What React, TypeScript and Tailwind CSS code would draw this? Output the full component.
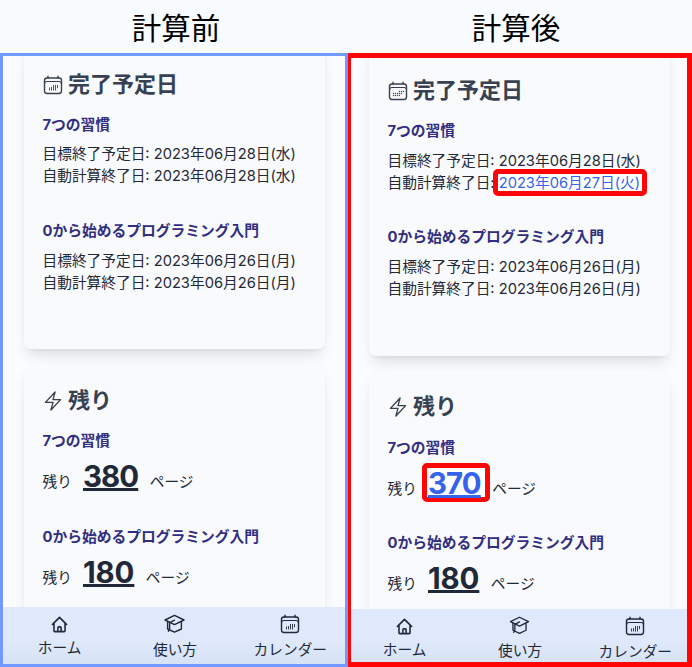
import type { ReactNode } from 'react';
import { HiOutlineBolt } from 'react-icons/hi2';
import { HiOutlineHome } from 'react-icons/hi';

const dots = [
  [12.5, 11.5], [14.5, 11.5], [16.5, 11.5],
  [6.5, 13.5], [8.5, 13.5], [10.5, 13.5], [12.5, 13.5], [14.5, 13.5],
  [6.5, 15.5], [8.5, 15.5], [10.5, 15.5], [12.5, 15.5],
];

function CalendarIcon({ bars, className = '' }: { bars?: boolean; className?: string }) {
  return (
    <svg
      viewBox="0 0 22 22"
      fill="none"
      stroke="currentColor"
      strokeWidth={1.4}
      strokeLinecap="round"
      strokeLinejoin="round"
      className={`size-[22px] shrink-0 ${className}`}
    >
      <rect x="2.5" y="4" width="17" height="15.5" rx="2.4" />
      <path d="M6 2.2v1.8M16 2.2v1.8" />
      <path strokeWidth={1.1} d="M2.8 9.2Q3.2 7.5 4.8 7.5h12.4Q18.8 7.5 19.2 9.2" />
      {bars ? (
        <path
          strokeWidth={0.9}
          strokeLinecap="butt"
          d="M7.5 13.5v3M9.5 13v3.5M11.5 11v5.5M13.5 11v5.5M15.5 11v3.2"
        />
      ) : (
        dots.map(([x, y]) => (
          <circle key={`${x}-${y}`} cx={x} cy={y} r={0.7} fill="currentColor" stroke="none" />
        ))
      )}
    </svg>
  );
}

function CapIcon() {
  return (
    <svg
      viewBox="0 0 21 20"
      fill="none"
      stroke="currentColor"
      strokeWidth={1.4}
      strokeLinecap="round"
      strokeLinejoin="round"
      className="mb-[1px] h-[20px] w-[21px]"
    >
      <path d="M1 6 10.5 1.3 20 6 10.5 10.6Z" />
      <path d="M3.6 7.4v7.6L10.5 18.2 17.4 15V7.4" />
      <path d="M10.5 6.2 5.6 8.8v5.8q0 1.6-1.2 2.6" />
    </svg>
  );
}

function Highlight({ children, box }: { children: ReactNode; box: string }) {
  return (
    <span className="relative inline-block text-[#3563e9]">
      <span className={`absolute rounded-[5px] border-[5px] border-[#ff0606] bg-white ${box}`} />
      <span className="relative">{children}</span>
    </span>
  );
}

function CardTitle({ icon, children }: { icon: ReactNode; children: ReactNode }) {
  return (
    <h2 className="-ml-[0.5px] flex h-[33px] items-center gap-[4px] text-[22px] leading-[33px] font-bold text-[#374151]">
      {icon}
      <span>{children}</span>
    </h2>
  );
}

function BookTitle({ children }: { children: ReactNode }) {
  return (
    <h3 className="h-[22px] text-[14.75px] leading-[22px] font-bold whitespace-nowrap text-[#312e81]">{children}</h3>
  );
}

function Dates({ target, auto, gap }: { target: string; auto: ReactNode; gap: string }) {
  return (
    <div className={`leading-[22px] whitespace-nowrap ${gap}`}>
      <p className="h-[22px]">目標終了予定日: {target}</p>
      <p className="h-[22px]">自動計算終了日: {auto}</p>
    </div>
  );
}

function Pages({ count, changed, tracking }: { count: string; changed?: boolean; tracking: string }) {
  const number = (
    <span
      className={`text-[29.4px] font-bold underline decoration-[3px] underline-offset-[1px] [text-decoration-skip-ink:none] ${tracking}`}
    >
      {count}
    </span>
  );
  return (
    <div className="flex h-[44px] items-baseline leading-[44px]">
      <span className="w-[40.5px]">残り</span>
      {changed ? <Highlight box="-left-[6.5px] top-[1px] h-[39px] w-[68px]">{number}</Highlight> : number}
      <span className="ml-[11.5px]">ページ</span>
    </div>
  );
}

function NavItem({ icon, label, gap }: { icon: ReactNode; label: string; gap: string }) {
  return (
    <div className={`flex flex-1 flex-col items-center pt-[7px] ${gap}`}>
      {icon}
      <span className="leading-[22px] whitespace-nowrap">{label}</span>
    </div>
  );
}

function Phone({ after }: { after?: boolean }) {
  return (
    <section
      className={`flex flex-col overflow-hidden bg-[#fbfcff] ${
        after ? 'w-[344px] border-y-[5px] border-r-[5px] border-l-[3px] border-[#ff0606]' : 'w-[348px] border-[3px] border-[#7199ff]'
      }`}
    >
      <div className={`flex min-h-0 flex-1 flex-col overflow-hidden ${after ? 'pl-[18px]' : 'pl-[21px]'}`}>
        <div
          className={`-mt-[20px] w-[301px] shrink-0 rounded-[7px] bg-[#f9fafc] pl-[18.5px] shadow-lg ${
            after ? 'h-[318px] pt-[36px]' : 'h-[313px] pt-[32px]'
          }`}
        >
          <CardTitle icon={<CalendarIcon bars={!after} />}>完了予定日</CardTitle>
          <div className="h-[13px]" />
          <BookTitle>7つの習慣</BookTitle>
          <Dates
            gap={after ? 'mt-[8px]' : 'mt-[7px]'}
            target="2023年06月28日(水)"
            auto={
              after ? (
                <Highlight box="-top-[3px] -left-[6px] h-[27px] w-[154px]">2023年06月27日(火)</Highlight>
              ) : (
                '2023年06月28日(水)'
              )
            }
          />
          <div className={after ? 'h-[32px]' : 'h-[33px]'} />
          <BookTitle>0から始めるプログラミング入門</BookTitle>
          <Dates gap="mt-[8px]" target="2023年06月26日(月)" auto="2023年06月26日(月)" />
        </div>
        <div
          className={`mt-[15px] h-[300px] w-[301px] shrink-0 rounded-[7px] bg-[#f9fafc] pl-[18.5px] shadow-lg ${
            after ? 'pt-[19px]' : 'pt-[20px]'
          }`}
        >
          <CardTitle icon={<HiOutlineBolt className="size-[22px] shrink-0" />}>残り</CardTitle>
          <div className={after ? 'h-[14px]' : 'h-[13px]'} />
          <BookTitle>7つの習慣</BookTitle>
          <div className={'h-[3px]'} />
          <Pages count={after ? '370' : '380'} changed={after} tracking="tracking-[-0.9px]" />
          <div className={after ? 'h-[26px]' : 'h-[27px]'} />
          <BookTitle>0から始めるプログラミング入門</BookTitle>
          <div className={'h-[3px]'} />
          <Pages count="180" tracking="tracking-[-0.1px]" />
        </div>
      </div>
      <nav
        className={`relative flex shrink-0 bg-linear-to-b from-[#dfe9fb] from-60% to-[#d7e2f5] shadow-[4px_0_0_#dfe9fb] ${
          after ? '-ml-[4px] h-[53px] w-[346px]' : '-ml-[1px] h-[57px] w-[346px]'
        }`}
      >
        <NavItem icon={<HiOutlineHome className="mt-[1px] size-[19px]" />} label="ホーム" gap="gap-[3px]" />
        <NavItem icon={<CapIcon />} label="使い方" gap="gap-[4px]" />
        <NavItem icon={<CalendarIcon bars className="-mt-[1px]" />} label="カレンダー" gap="gap-[4px]" />
      </nav>
    </section>
  );
}

export default function App() {
  return (
    <main className="flex h-[667px] w-[692px] flex-col overflow-hidden bg-[#f9fcff] font-[Inter,'Noto_Sans_CJK_JP',sans-serif] text-[14.7px] text-[#1f2937]">
      <header className="flex h-[53px] text-center text-[29.5px] leading-[57px] text-black">
        <h1 className="w-[352px]">計算前</h1>
        <h1 className="w-[328px]">計算後</h1>
      </header>
      <div className="flex h-[614px]">
        <Phone />
        <Phone after />
      </div>
    </main>
  );
}
